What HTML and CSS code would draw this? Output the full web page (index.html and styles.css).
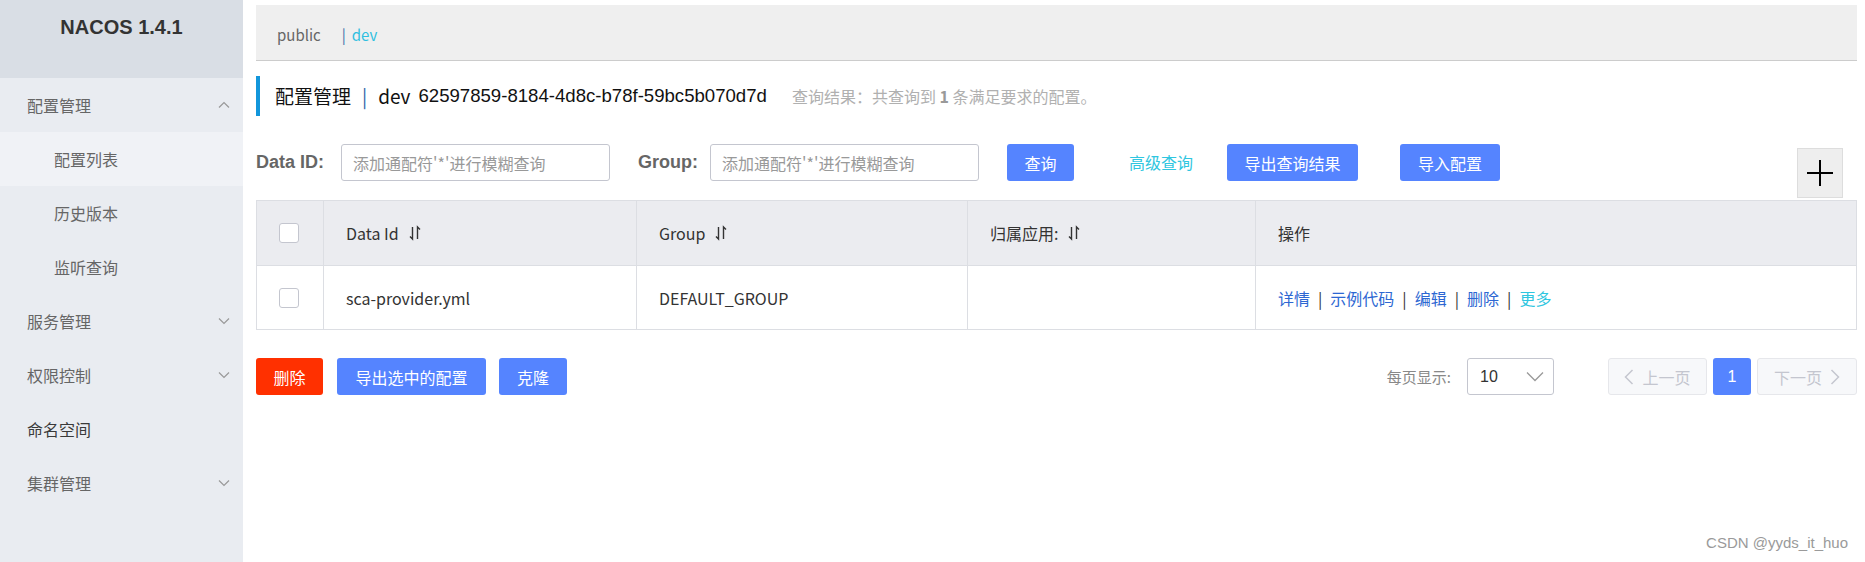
FILE: index.html
```html
<!DOCTYPE html>
<html lang="zh-CN">
<head>
<meta charset="utf-8">
<title>NACOS</title>
<link rel="stylesheet" href="styles.css">
</head>
<body>
<div class="app">
  <aside class="sidebar">
    <div class="logo">NACOS 1.4.1</div>
    <ul class="menu">
      <li class="menu-item"><span>配置管理</span><svg class="chev" width="12" height="8" viewBox="0 0 12 8"><path d="M1 6.5L6 1.5L11 6.5"/></svg></li>
      <li class="menu-item sub selected"><span>配置列表</span></li>
      <li class="menu-item sub"><span>历史版本</span></li>
      <li class="menu-item sub"><span>监听查询</span></li>
      <li class="menu-item"><span>服务管理</span><svg class="chev" width="12" height="8" viewBox="0 0 12 8"><path d="M1 1.5L6 6.5L11 1.5"/></svg></li>
      <li class="menu-item"><span>权限控制</span><svg class="chev" width="12" height="8" viewBox="0 0 12 8"><path d="M1 1.5L6 6.5L11 1.5"/></svg></li>
      <li class="menu-item dark"><span>命名空间</span></li>
      <li class="menu-item"><span>集群管理</span><svg class="chev" width="12" height="8" viewBox="0 0 12 8"><path d="M1 1.5L6 6.5L11 1.5"/></svg></li>
    </ul>
  </aside>

  <main class="main">
    <div class="ns-bar">
      <span class="ns-public">public</span>
      <span class="ns-sep">|</span>
      <span class="ns-dev">dev</span>
    </div>

    <div class="page-title">
      <span>配置管理</span>
      <span class="title-sep">|</span>
      <span>dev</span>
      <span class="ns-id">62597859-8184-4d8c-b78f-59bc5b070d7d</span>
      <span class="hint">查询结果：共查询到 <b>1</b> 条满足要求的配置。</span>
    </div>

    <div class="filter">
      <span class="label">Data ID:</span>
      <div class="input">添加通配符'*'进行模糊查询</div>
      <span class="label label-group">Group:</span>
      <div class="input">添加通配符'*'进行模糊查询</div>
      <div class="btn btn-query">查询</div>
      <div class="link-btn">高级查询</div>
      <div class="btn btn-export">导出查询结果</div>
      <div class="btn btn-import">导入配置</div>
      <div class="add-btn"><svg width="28" height="28" viewBox="0 0 28 28"><path d="M14 1V27M1 14H27"/></svg></div>
    </div>

    <table class="grid">
      <colgroup>
        <col class="c-check"><col class="c-id"><col class="c-group"><col class="c-app"><col>
      </colgroup>
      <thead>
        <tr>
          <th class="check-cell"><span class="checkbox"></span></th>
          <th><span class="th-inner">Data Id<svg class="sort" width="12" height="16" viewBox="0 0 12 16"><path d="M3.5 2V14L1 11.5M8.5 14V2L11 4.5"/></svg></span></th>
          <th><span class="th-inner">Group<svg class="sort" width="12" height="16" viewBox="0 0 12 16"><path d="M3.5 2V14L1 11.5M8.5 14V2L11 4.5"/></svg></span></th>
          <th><span class="th-inner">归属应用:<svg class="sort" width="12" height="16" viewBox="0 0 12 16"><path d="M3.5 2V14L1 11.5M8.5 14V2L11 4.5"/></svg></span></th>
          <th>操作</th>
        </tr>
      </thead>
      <tbody>
        <tr>
          <td class="check-cell"><span class="checkbox"></span></td>
          <td>sca-provider.yml</td>
          <td>DEFAULT_GROUP</td>
          <td></td>
          <td class="ops"><a>详情</a><span class="op-sep">|</span><a>示例代码</a><span class="op-sep">|</span><a>编辑</a><span class="op-sep">|</span><a>删除</a><span class="op-sep">|</span><a class="more">更多</a></td>
        </tr>
      </tbody>
    </table>

    <div class="footer">
      <div class="btn btn-danger">删除</div>
      <div class="btn btn-export-sel">导出选中的配置</div>
      <div class="btn btn-clone">克隆</div>
      <div class="pager">
        <span class="page-size-label">每页显示:</span>
        <div class="select"><span>10</span><svg width="18" height="11" viewBox="0 0 18 11"><path d="M1 1.5L9 9.5L17 1.5"/></svg></div>
        <div class="pg-btn pg-prev disabled"><svg width="10" height="16" viewBox="0 0 10 16"><path d="M8.5 1L1.5 8L8.5 15"/></svg><span>上一页</span></div>
        <div class="pg-btn pg-num">1</div>
        <div class="pg-btn pg-next disabled"><span>下一页</span><svg width="10" height="16" viewBox="0 0 10 16"><path d="M1.5 1L8.5 8L1.5 15"/></svg></div>
      </div>
    </div>
  </main>

  <div class="watermark">CSDN @yyds_it_huo</div>
</div>
</body>
</html>
```

FILE: styles.css
```css
html, body {
  margin: 0;
  padding: 0;
  background: #fff;
}

body {
  font-family: "Noto Sans CJK SC", "Liberation Sans", sans-serif;
  color: #333;
}

.app {
  position: relative;
  display: flex;
  height: 562px;
  overflow: hidden;
}

/* ---------- sidebar ---------- */
.sidebar {
  width: 243px;
  flex: none;
  background: #e9ecf1;
}

.logo {
  height: 78px;
  box-sizing: border-box;
  padding-top: 14px;
  background: #d9dee5;
  text-align: center;
  font-family: "Liberation Sans", sans-serif;
  font-weight: bold;
  font-size: 20px;
  line-height: 26px;
  color: #333;
}

.menu {
  list-style: none;
  margin: 0;
  padding: 0;
}

.menu-item {
  height: 54px;
  display: flex;
  align-items: center;
  justify-content: space-between;
  padding: 0 13px 0 27px;
  font-size: 16px;
  line-height: 20px;
  color: #666;
}

.menu-item.sub {
  padding-left: 54px;
}

.menu-item.selected {
  background: #f0f2f6;
}

.menu-item.dark {
  color: #3a3a3a;
}

.chev path {
  fill: none;
  stroke: #999;
  stroke-width: 1.2;
}

/* ---------- main ---------- */
.main {
  flex: 1;
  min-width: 0;
  padding: 5px 8px 0 13px;
}

.ns-bar {
  height: 56px;
  box-sizing: border-box;
  padding-top: 4px;
  padding-left: 21px;
  background: #efefef;
  border-bottom: 1px solid #ccc;
  display: flex;
  align-items: center;
  font-size: 15px;
  line-height: 20px;
  color: #666;
}

.ns-sep {
  margin-left: 21px;
  color: #3d6ea8;
}

.ns-dev {
  margin-left: 6px;
  color: #2fbfe0;
}

.page-title {
  margin-top: 15px;
  height: 40px;
  border-left: 4px solid #1296db;
  display: flex;
  align-items: center;
  padding-left: 15px;
  font-size: 19px;
  line-height: 24px;
  color: #111;
}

.title-sep {
  margin: 0 11px;
  color: #2f64a8;
}

.ns-id {
  margin-left: 8px;
  font-family: "Liberation Sans", sans-serif;
  font-size: 18.6px;
}

.hint {
  margin-left: 25px;
  font-size: 16px;
  color: #b0b0b0;
}

.hint b {
  color: #999;
}

/* ---------- filter ---------- */
.filter {
  display: flex;
  align-items: flex-start;
  margin-top: 28px;
  height: 54px;
}

.label {
  height: 37px;
  line-height: 37px;
  font-family: "Liberation Sans", sans-serif;
  font-weight: bold;
  font-size: 18px;
  color: #666;
  margin-right: 17px;
}

.label-group {
  margin-left: 28px;
  margin-right: 12px;
}

.input {
  width: 269px;
  height: 37px;
  box-sizing: border-box;
  border: 1px solid #c4c6cf;
  border-radius: 3px;
  padding-left: 11px;
  display: flex;
  align-items: center;
  font-size: 16px;
  color: #999;
}

.btn {
  height: 37px;
  box-sizing: border-box;
  border-radius: 3px;
  background: #5584ff;
  color: #fff;
  font-size: 16px;
  display: flex;
  align-items: center;
  justify-content: center;
  flex: none;
}

.btn-query {
  width: 67px;
  margin-left: 28px;
}

.link-btn {
  height: 37px;
  line-height: 37px;
  margin-left: 55px;
  font-size: 16px;
  color: #2fc6e0;
}

.btn-export {
  width: 131px;
  margin-left: 34px;
}

.btn-import {
  width: 100px;
  margin-left: 42px;
}

.add-btn {
  margin-left: auto;
  margin-right: 14px;
  margin-top: 4px;
  width: 46px;
  height: 50px;
  box-sizing: border-box;
  background: #eee;
  border: 1px solid #ddd;
  display: flex;
  align-items: center;
  justify-content: center;
}

.add-btn path {
  stroke: #000;
  stroke-width: 2;
  fill: none;
}

/* ---------- table ---------- */
.grid {
  width: 100%;
  margin-top: 2px;
  border-collapse: collapse;
  table-layout: fixed;
  font-size: 16px;
  line-height: 20px;
}

.c-check { width: 67px; }
.c-id { width: 313px; }
.c-group { width: 331px; }
.c-app { width: 288px; }

.grid th,
.grid td {
  border: 1px solid #dcdee3;
  padding: 0 0 0 22px;
  text-align: left;
  vertical-align: middle;
}

.grid th {
  height: 64px;
  background: #ebecf0;
  font-weight: normal;
  color: #333;
}

.grid td {
  height: 63px;
  color: #333;
}

.grid .check-cell {
  padding-left: 22px;
}

.checkbox {
  display: block;
  width: 20px;
  height: 20px;
  box-sizing: border-box;
  border: 1px solid #c4c6cf;
  border-radius: 3px;
  background: #fff;
}

.th-inner {
  display: inline-flex;
  align-items: center;
}

.sort {
  margin-left: 10px;
}

.sort path {
  fill: none;
  stroke: #333;
  stroke-width: 1.4;
}

.ops a {
  color: #2d67d2;
}

.ops a.more {
  color: #2fc6e0;
}

.op-sep {
  margin: 0 8px;
  color: #333;
}

/* ---------- footer ---------- */
.footer {
  display: flex;
  align-items: center;
  margin-top: 28px;
  height: 37px;
}

.btn-danger {
  width: 67px;
  background: #ff3000;
}

.btn-export-sel {
  width: 149px;
  margin-left: 14px;
}

.btn-clone {
  width: 68px;
  margin-left: 13px;
}

.pager {
  margin-left: auto;
  display: flex;
  align-items: center;
}

.page-size-label {
  font-size: 15px;
  color: #888;
}

.select {
  margin-left: 16px;
  width: 87px;
  height: 37px;
  box-sizing: border-box;
  border: 1px solid #c4c6cf;
  border-radius: 3px;
  display: flex;
  align-items: center;
  justify-content: space-between;
  padding: 0 9px 0 12px;
  font-family: "Liberation Sans", sans-serif;
  font-size: 16px;
  color: #333;
}

.select path {
  fill: none;
  stroke: #999;
  stroke-width: 1.3;
}

.pg-btn {
  height: 37px;
  box-sizing: border-box;
  border-radius: 3px;
  display: flex;
  align-items: center;
  justify-content: center;
  font-size: 16px;
}

.pg-btn.disabled {
  background: #f7f8fa;
  border: 1px solid #e6e7eb;
  color: #c4c6cf;
}

.pg-btn path {
  fill: none;
  stroke: #c4c6cf;
  stroke-width: 1.5;
}

.pg-prev {
  width: 99px;
  margin-left: 54px;
}

.pg-prev span {
  margin-left: 8px;
}

.pg-next span {
  margin-right: 8px;
}

.pg-num {
  width: 38px;
  margin-left: 6px;
  background: #5584ff;
  color: #fff;
  font-family: "Liberation Sans", sans-serif;
}

.pg-next {
  width: 100px;
  margin-left: 6px;
}

/* ---------- watermark overlay ---------- */
.watermark {
  position: absolute;
  right: 17px;
  bottom: 10px;
  font-family: "Liberation Sans", sans-serif;
  font-size: 15px;
  line-height: 18px;
  color: #9a9a9a;
}
```
